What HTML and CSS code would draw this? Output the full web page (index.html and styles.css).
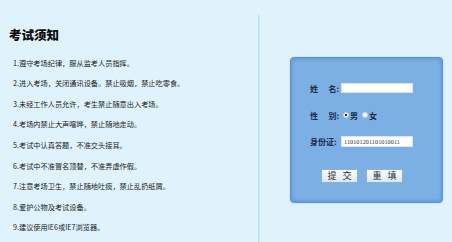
FILE: index.html
```html
<!DOCTYPE html>
<html>
<head>
<meta charset="utf-8">
<link rel="stylesheet" href="styles.css">
</head>
<body>
<div class="page">
  <div class="left">
    <h1 class="title">考试须知</h1>
    <ol class="rules">
      <li>1.遵守考场纪律，服从监考人员指挥。</li>
      <li>2.进入考场，关闭通讯设备。禁止吸烟，禁止吃零食。</li>
      <li>3.未经工作人员允许，考生禁止随意出入考场。</li>
      <li>4.考场内禁止大声喧哗，禁止随地走动。</li>
      <li>5.考试中认真答题，不准交头接耳。</li>
      <li>6.考试中不准冒名顶替，不准弄虚作假。</li>
      <li>7.注意考场卫生，禁止随地吐痰，禁止乱扔纸屑。</li>
      <li>8.爱护公物及考试设备。</li>
      <li>9.建议使用IE6或IE7浏览器。</li>
    </ol>
  </div>
  <div class="right">
    <form class="panel">
      <div class="row r1">
        <span class="label"><span>姓</span><span>名:</span></span>
        <input class="field" type="text">
      </div>
      <div class="row r2">
        <span class="label"><span>性</span><span>别:</span></span>
        <span class="radios">
          <input class="radio" type="radio" name="sex" checked><span class="opt">男</span>
          <input class="radio" type="radio" name="sex"><span class="opt">女</span>
        </span>
      </div>
      <div class="row r3">
        <span class="label"><span>身份证:</span></span>
        <input class="field id" type="text" value="110101201101010011">
      </div>
      <div class="buttons">
        <button class="btn" type="button">提 交</button>
        <button class="btn" type="button">重 填</button>
      </div>
    </form>
  </div>
</div>
</body>
</html>
```
FILE: styles.css
```css
html, body {
  margin: 0;
  padding: 0;
  background: #e0f3fd;
  width: 452px;
  height: 242px;
  overflow: hidden;
}
.page {
  display: flex;
  height: 242px;
  font-family: "Noto Sans CJK SC", "Noto Sans", sans-serif;
}
.left {
  width: 258px;
  margin-top: 15px;
  border-right: 1px solid #b9dcf2;
  box-shadow: 1px 0 0 #d3ebf9;
}
.title {
  margin: 12px 0 0 9px;
  font-size: 12.5px;
  line-height: 16px;
  font-weight: 900;
  color: #0d0d0d;
}
.rules {
  list-style: none;
  margin: 9.7px 0 0 13px;
  padding: 0;
  font-size: 7.2px;
  line-height: 20.6px;
  color: #1a1a1a;
  white-space: nowrap;
}
.right {
  padding: 57px 0 0 31px;
}
.panel {
  box-sizing: border-box;
  width: 153px;
  height: 146px;
  border: 1px solid #5b95d4;
  border-radius: 4px;
  background: #7cb0e5;
  box-shadow: inset 0 0 5px #4d88ca, 0 0 2px #a9cdee;
  padding: 24px 0 0 19px;
  margin: 0;
}
.row {
  display: flex;
  align-items: center;
  height: 12px;
}
.r2 { margin-top: 15px; }
.r3 { margin-top: 14px; }
.label {
  display: flex;
  justify-content: space-between;
  width: 29px;
  font-size: 8px;
  font-weight: 700;
  color: #1c2a44;
  margin-right: 2px;
}
.field {
  box-sizing: border-box;
  width: 72px;
  height: 10px;
  margin: 0;
  padding: 0 2px;
  border: 1px solid #d6e6f4;
  background: #fff;
  outline: none;
}
.id {
  height: 11px;
  font-family: "Liberation Serif", serif;
  font-size: 6.3px;
  color: #333;
}
.radios {
  display: flex;
  align-items: center;
  margin-left: 2px;
}
.radio {
  appearance: none;
  -webkit-appearance: none;
  box-sizing: border-box;
  width: 6px;
  height: 6px;
  margin: 0 1px 0 0;
  border-radius: 50%;
  border: 1px solid #c9d6e3;
  background: #fff;
}
.radio:checked {
  background: radial-gradient(circle, #334 0 1.2px, #fff 1.5px);
}
.opt {
  font-size: 8px;
  font-weight: 700;
  color: #1c2a44;
  margin-right: 4px;
}
.buttons {
  display: flex;
  gap: 8px;
  margin: 22px 0 0 11px;
}
.btn {
  box-sizing: border-box;
  width: 37px;
  height: 14px;
  padding: 0 0 0 2px;
  border: 1px solid #8fb0d3;
  background: linear-gradient(#fbfdff, #d9e8f6);
  font-family: "Noto Sans CJK SC", sans-serif;
  font-size: 9px;
  line-height: 12px;
  color: #2a2f3a;
  letter-spacing: 2px;
}
```
